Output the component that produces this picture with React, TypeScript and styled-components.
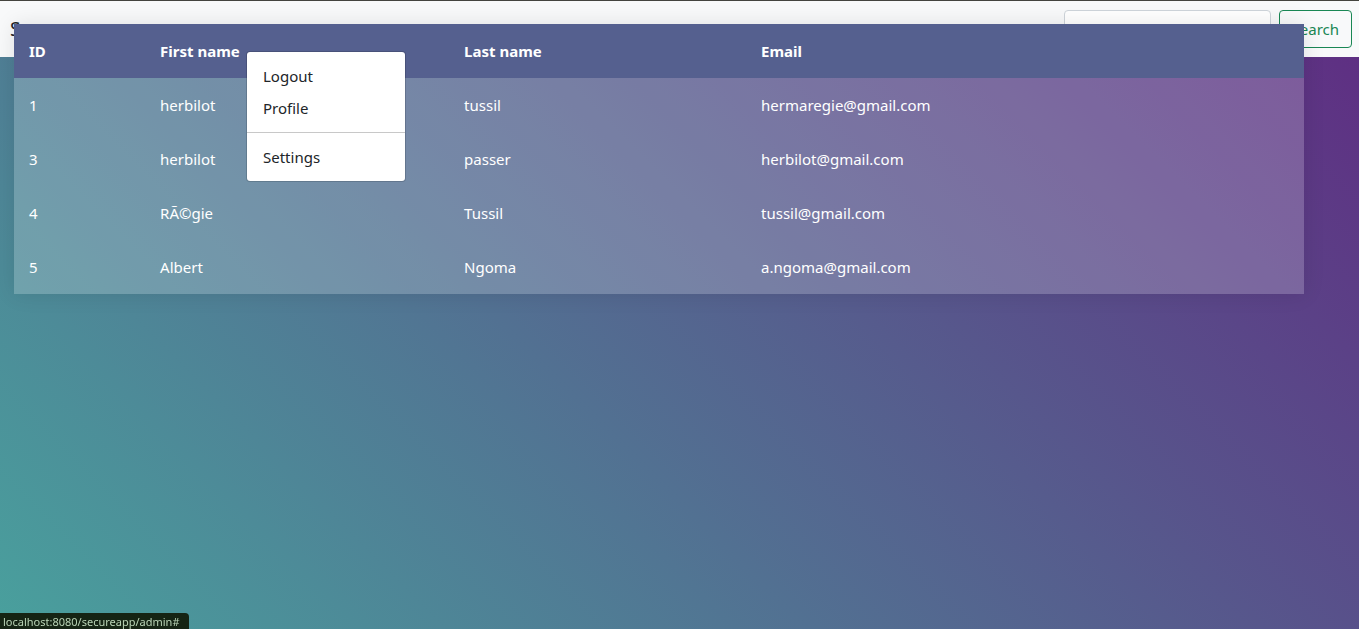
import React from "react";
import styled, { createGlobalStyle } from "styled-components";

const GlobalStyle = createGlobalStyle`
  *, *::before, *::after { box-sizing: border-box; }
  html { height: 100%; }
  body {
    margin: 0;
    min-height: 100%;
    background: linear-gradient(45deg, #49a09d, #5f2c82) fixed;
    color: #212529;
    font-family: "Noto Sans", "Open Sans", sans-serif;
    font-size: 15px;
    line-height: 24px;
  }
`;

const Page = styled.div`
  position: relative;
  min-height: 100vh;
`;

const Navbar = styled.nav`
  display: flex;
  align-items: center;
  gap: 16px;
  height: 57px;
  padding: 0 7px 0 10px;
  border-top: 1px solid #44443f;
  background: #f8f9fa;
`;

const Brand = styled.a`
  color: #212529;
  font-size: 19px;
  line-height: 30px;
  text-decoration: none;
`;

const NavList = styled.ul`
  display: flex;
  flex: 1;
  margin: 0;
  padding: 0;
  list-style: none;
`;

const NavLink = styled.a`
  display: block;
  padding: 8px;
  color: #6c6f72;
  text-decoration: none;
`;

const SearchForm = styled.form`
  display: flex;
  gap: 8px;
`;

const SearchInput = styled.input`
  width: 207px;
  height: 38px;
  padding: 6px 12px;
  border: 1px solid #ced4da;
  border-radius: 4px;
  background: #fff;
  font: inherit;
  &::placeholder { color: #6c757d; }
`;

const SearchButton = styled.button`
  height: 38px;
  padding: 6px 12px;
  border: 1px solid #198754;
  border-radius: 4px;
  background: transparent;
  color: #198754;
  font: inherit;
`;

const TableLayer = styled.main`
  position: absolute;
  top: 24px;
  left: 14px;
  right: 55px;
`;

const UserTable = styled.table`
  width: 100%;
  table-layout: fixed;
  border-collapse: collapse;
  box-shadow: 0 0 20px rgba(0, 0, 0, 0.1);
  color: #fff;
`;

const Column = styled.col<{ $share?: string }>`
  width: ${({ $share }) => $share ?? "auto"};
`;

const HeadCell = styled.th`
  padding: 15px;
  background: #55608f;
  font-weight: 700;
  text-align: left;
`;

const Cell = styled.td`
  padding: 15px;
  background: rgba(255, 255, 255, 0.2);
`;

const Menu = styled.ul`
  position: absolute;
  top: 51px;
  left: 246px;
  width: 160px;
  margin: 0;
  padding: 8px 0;
  border: 1px solid rgba(0, 0, 0, 0.15);
  border-radius: 4px;
  background: #fff;
  background-clip: padding-box;
  list-style: none;
`;

const MenuLink = styled.a`
  display: block;
  padding: 4px 16px;
  color: #212529;
  text-decoration: none;
`;

const Divider = styled.li`
  height: 1px;
  margin: 8px 0;
  background: #c8c8c8;
`;

const StatusBar = styled.div`
  position: fixed;
  bottom: 0;
  left: 0;
  padding: 2px 9px 0 3px;
  border-top-right-radius: 4px;
  background: #152414;
  color: #b9d3b5;
  font-size: 11px;
  line-height: 14px;
`;

const users = [
  { id: 1, first: "herbilot", last: "tussil", email: "hermaregie@gmail.com" },
  { id: 3, first: "herbilot", last: "passer", email: "herbilot@gmail.com" },
  { id: 4, first: "RÃ©gie", last: "Tussil", email: "tussil@gmail.com" },
  { id: 5, first: "Albert", last: "Ngoma", email: "a.ngoma@gmail.com" },
];

export default function App() {
  return (
    <Page>
      <GlobalStyle />
      <Navbar>
        <Brand href="#">Secureapp</Brand>
        <NavList>
          <li><NavLink href="#">Home</NavLink></li>
          <li><NavLink href="#">Link</NavLink></li>
          <li><NavLink href="#">Admin</NavLink></li>
        </NavList>
        <SearchForm onSubmit={(event) => event.preventDefault()}>
          <SearchInput type="search" placeholder="Search" aria-label="Search" />
          <SearchButton type="submit">Search</SearchButton>
        </SearchForm>
      </Navbar>
      <TableLayer>
        <UserTable>
          <colgroup>
            <Column $share="10.16%" />
            <Column $share="23.57%" />
            <Column $share="23.02%" />
            <Column />
          </colgroup>
          <thead>
            <tr>
              <HeadCell scope="col">ID</HeadCell>
              <HeadCell scope="col">First name</HeadCell>
              <HeadCell scope="col">Last name</HeadCell>
              <HeadCell scope="col">Email</HeadCell>
            </tr>
          </thead>
          <tbody>
            {users.map((user) => (
              <tr key={user.id}>
                <Cell>{user.id}</Cell>
                <Cell>{user.first}</Cell>
                <Cell>{user.last}</Cell>
                <Cell>{user.email}</Cell>
              </tr>
            ))}
          </tbody>
        </UserTable>
      </TableLayer>
      <Menu>
        <li><MenuLink href="#">Logout</MenuLink></li>
        <li><MenuLink href="#">Profile</MenuLink></li>
        <Divider role="separator" />
        <li><MenuLink href="#">Settings</MenuLink></li>
      </Menu>
      <StatusBar>localhost:8080/secureapp/admin#</StatusBar>
    </Page>
  );
}
